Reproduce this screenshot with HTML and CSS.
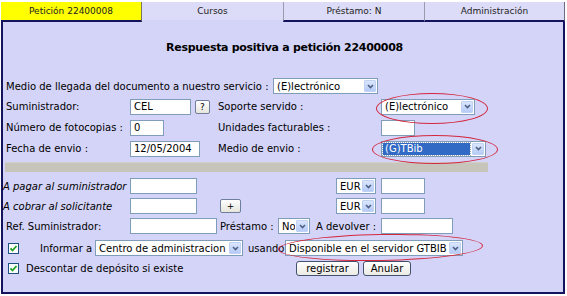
FILE: index.html
```html
<!DOCTYPE html>
<html lang="es">
<head>
    <meta charset="UTF-8">
    <title>Respuesta positiva a petición 22400008</title>
    <link rel="stylesheet" href="styles.css">
</head>
<body>
    <div class="page">
        <div class="tabs">
            <div class="tab tab-current">Petición 22400008</div>
            <div class="tab tab-active">Cursos</div>
            <div class="tab">Préstamo: N</div>
            <div class="tab tab-last">Administración</div>
        </div>

        <div class="panel">
            <h1 class="title">Respuesta positiva a petición 22400008</h1>

            <div class="row">
                <span class="c-wide">Medio de llegada del documento a nuestro servicio :</span>
                <span class="sel w105"><span class="sel-text">(E)lectrónico</span><span class="arrow"><svg width="7" height="5" viewBox="0 0 7 5"><path d="M1 1 L3.5 3.5 L6 1" fill="none" stroke="#4d6185" stroke-width="1.6"/></svg></span></span>
            </div>

            <div class="row r21">
                <span class="c1">Suministrador:</span>
                <span class="c2"><input class="inp w61" value="CEL"><button class="mini">?</button></span>
                <span class="c3">Soporte servido :</span>
                <span class="sel w94"><span class="sel-text">(E)lectrónico</span><span class="arrow"><svg width="7" height="5" viewBox="0 0 7 5"><path d="M1 1 L3.5 3.5 L6 1" fill="none" stroke="#4d6185" stroke-width="1.6"/></svg></span></span>
            </div>

            <div class="row r21">
                <span class="c1">Número de fotocopias :</span>
                <span class="c2"><input class="inp w34" value="0"></span>
                <span class="c3">Unidades facturables :</span>
                <input class="inp w34" value="">
            </div>

            <div class="row r21">
                <span class="c1">Fecha de envio :</span>
                <span class="c2"><input class="inp w70" value="12/05/2004"></span>
                <span class="c3">Medio de envio :</span>
                <span class="sel w105 sel-focus"><span class="sel-text">(G)TBib</span><span class="arrow"><svg width="7" height="5" viewBox="0 0 7 5"><path d="M1 1 L3.5 3.5 L6 1" fill="none" stroke="#4d6185" stroke-width="1.6"/></svg></span></span>
            </div>

            <div class="separator"></div>

            <div class="row">
                <span class="c1 it">A pagar al suministrador</span>
                <span class="b2"><input class="inp w67" value=""></span>
                <span class="b3"></span>
                <span class="b4"><span class="sel w39"><span class="sel-text">EUR</span><span class="arrow"><svg width="7" height="5" viewBox="0 0 7 5"><path d="M1 1 L3.5 3.5 L6 1" fill="none" stroke="#4d6185" stroke-width="1.6"/></svg></span></span></span>
                <input class="inp w44" value="">
            </div>

            <div class="row">
                <span class="c1 it">A cobrar al solicitante</span>
                <span class="b2"><input class="inp w67" value=""></span>
                <span class="b3"><button class="mini mini-plus">+</button></span>
                <span class="b4"><span class="sel w39"><span class="sel-text">EUR</span><span class="arrow"><svg width="7" height="5" viewBox="0 0 7 5"><path d="M1 1 L3.5 3.5 L6 1" fill="none" stroke="#4d6185" stroke-width="1.6"/></svg></span></span></span>
                <input class="inp w44" value="">
            </div>

            <div class="row">
                <span class="c1">Ref. Suministrador:</span>
                <span class="b2"><input class="inp w87" value=""></span>
                <span class="loan-label">Préstamo :</span>
                <span class="sel w32"><span class="sel-text">No</span><span class="arrow"><svg width="7" height="5" viewBox="0 0 7 5"><path d="M1 1 L3.5 3.5 L6 1" fill="none" stroke="#4d6185" stroke-width="1.6"/></svg></span></span>
                <span class="return-label">A devolver :</span>
                <input class="inp w72" value="">
            </div>

            <div class="row r-gap">
                <span class="check"><svg width="11" height="11" viewBox="0 0 11 11"><rect x="0.5" y="0.5" width="10" height="10" fill="#fdfdfb" stroke="#1c5180"/><path d="M2.5 5.3 L4.5 7.5 L8.5 3" fill="none" stroke="#21a121" stroke-width="1.8"/></svg></span>
                <span class="inform-label">Informar a</span>
                <span class="sel w148"><span class="sel-text">Centro de administracion</span><span class="arrow"><svg width="7" height="5" viewBox="0 0 7 5"><path d="M1 1 L3.5 3.5 L6 1" fill="none" stroke="#4d6185" stroke-width="1.6"/></svg></span></span>
                <span class="using-label">usando</span>
                <span class="sel w178"><span class="sel-text">Disponible en el servidor GTBIB</span><span class="arrow"><svg width="7" height="5" viewBox="0 0 7 5"><path d="M1 1 L3.5 3.5 L6 1" fill="none" stroke="#4d6185" stroke-width="1.6"/></svg></span></span>
            </div>

            <div class="row">
                <span class="deposit">
                    <span class="check"><svg width="11" height="11" viewBox="0 0 11 11"><rect x="0.5" y="0.5" width="10" height="10" fill="#fdfdfb" stroke="#1c5180"/><path d="M2.5 5.3 L4.5 7.5 L8.5 3" fill="none" stroke="#21a121" stroke-width="1.8"/></svg></span>
                    <span class="deposit-text">Descontar de depósito si existe</span>
                </span>
                <button class="btn w63">registrar</button>
                <button class="btn w48">Anular</button>
            </div>

            <!-- red annotation marks -->
            <div class="mark mark-soporte"></div>
            <div class="mark mark-envio"></div>
            <div class="mark mark-usando"></div>
        </div>
    </div>
</body>
</html>
```

FILE: styles.css
```css
body {
    margin: 0;
    background: #fff;
    font-family: "DejaVu Sans", Verdana, sans-serif;
    font-size: 10px;
    color: #000;
}
input, button {
    font: inherit;
    color: inherit;
}
.page {
    width: 564px;
    margin-left: 1px;
}
.tabs {
    display: flex;
    height: 22px;
    padding-top: 2px;
    box-sizing: border-box;
}
.tab {
    width: 141px;
    box-sizing: border-box;
    display: flex;
    align-items: center;
    justify-content: center;
    font-size: 9px;
    color: #222;
    background: #dcdcf8;
    border-left: 1px solid #9a9ab0;
    border-bottom: 2px solid #14145e;
}
.tab-current {
    background: #ffff00;
    border-left: none;
    border-right: 1px solid #77775a;
}
.tab-current + .tab {
    border-left: none;
}
.tab-active {
    border-bottom-color: #d4d4f8;
}
.tab-last {
    border-right: 1px solid #6a6a80;
}
.panel {
    position: relative;
    height: 272px;
    box-sizing: border-box;
    border: 2px solid #14145e;
    border-top: none;
    background: #d4d4f8;
    padding: 16px 0 0 3px;
}
.title {
    margin: 0 0 18px;
    height: 20px;
    line-height: 20px;
    text-align: center;
    font-size: 11px;
    letter-spacing: -0.3px;
    font-weight: bold;
}
.row {
    display: flex;
    align-items: center;
    height: 20px;
    white-space: nowrap;
}
.r21 {
    height: 21px;
}
.r-gap {
    margin-top: 2px;
}
.c-wide { width: 267px; }
.c1 { width: 124px; flex: none; }
.c2 { width: 88px; flex: none; display: flex; align-items: center; }
.c3 { width: 163px; flex: none; }
.b2 { width: 90px; flex: none; display: flex; }
.b3 { width: 116px; flex: none; display: flex; }
.b4 { width: 45px; flex: none; display: flex; }
.it {
    font-style: italic;
    margin-left: -3px;
    width: 127px;
}
.separator {
    margin: 3px 0 4px -1px;
    width: 483px;
    height: 10px;
    background: #c7c4bc;
    border-top: 1px solid #d3d0ca;
    box-sizing: border-box;
}
.inp {
    box-sizing: border-box;
    height: 16px;
    margin: 0;
    padding: 0 3px;
    border: 1px solid #7f9db9;
    background: #fff;
    outline: none;
}
.w34 { width: 34px; }
.w44 { width: 44px; }
.w61 { width: 61px; }
.w67 { width: 67px; }
.w70 { width: 70px; }
.w72 { width: 72px; }
.w87 { width: 87px; }
.sel {
    box-sizing: border-box;
    display: inline-flex;
    align-items: center;
    height: 16px;
    border: 1px solid #7f9db9;
    background: #fff;
    flex: none;
}
.w32 { width: 32px; }
.w39 { width: 40px; }
.w94 { width: 94px; }
.w105 { width: 105px; }
.w148 { width: 148px; }
.w178 { width: 178px; }
.sel-text {
    flex: 1;
    padding-left: 3px;
    overflow: hidden;
}
.sel-focus .sel-text {
    margin: 1px;
    padding-left: 2px;
    line-height: 12px;
    background: #316ac5;
    color: #fff;
    outline: 1px dotted #9ab;
}
.arrow {
    width: 12px;
    height: 12px;
    margin: 1px;
    box-sizing: border-box;
    display: flex;
    align-items: center;
    justify-content: center;
    background: linear-gradient(#dbe6fd, #b6cbf7);
    border: 1px solid #c0d2f4;
    border-radius: 1px;
}
.mini {
    box-sizing: border-box;
    width: 15px;
    height: 14px;
    margin: 0 0 0 4px;
    padding: 0;
    font-size: 9px;
    line-height: 12px;
    border: 1px solid #6f7f99;
    border-radius: 2px;
    background: linear-gradient(#ffffff, #e6e5dd);
}
.mini-plus {
    width: 21px;
    margin-left: 0;
}
.loan-label { width: 58px; }
.return-label { width: 65px; margin-left: 6px; }
.check {
    display: inline-flex;
    margin-left: 2px;
}
.inform-label {
    width: 55px;
    margin-left: 21px;
}
.using-label {
    width: 37px;
    margin-left: 5px;
}
.deposit {
    width: 290px;
    display: flex;
    align-items: center;
}
.deposit-text {
    margin-left: 7px;
}
.btn {
    box-sizing: border-box;
    height: 15px;
    margin: 0 4px 0 0;
    padding: 0;
    line-height: 13px;
    border: 1px solid #42526e;
    border-radius: 3px;
    background: linear-gradient(#ffffff, #ecebe4);
}
.w63 { width: 63px; }
.w48 { width: 48px; }
.mark {
    position: absolute;
    border: 1.5px solid #d3283e;
    border-radius: 50%;
}
.mark-soporte {
    left: 373px;
    top: 71px;
    width: 110px;
    height: 29px;
}
.mark-envio {
    left: 369px;
    top: 113px;
    width: 124px;
    height: 27px;
}
.mark-usando {
    left: 275px;
    top: 212px;
    width: 203px;
    height: 25px;
    transform: rotate(-1deg);
}
```
